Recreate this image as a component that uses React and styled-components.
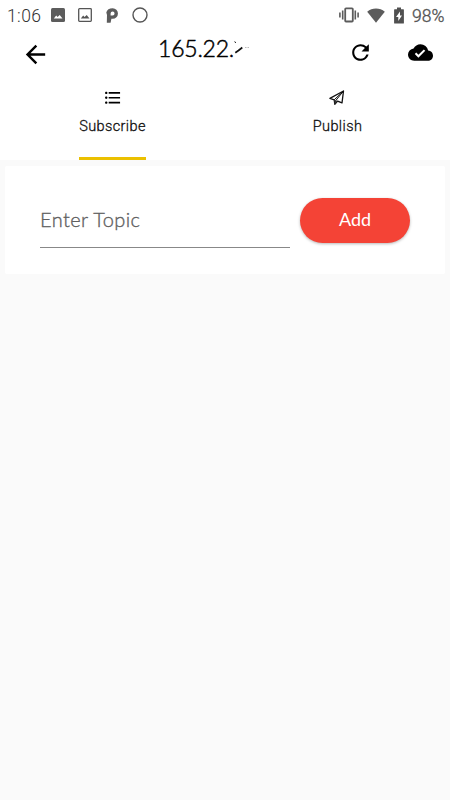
import React from 'react'
import styled, { createGlobalStyle } from 'styled-components'
import {
    MdArrowBack,
    MdRefresh,
    MdCloudDone,
    MdFormatListBulleted
} from 'react-icons/md'

const App = () => {
    return (
        <>
            <GlobalStyle />
            <Screen>
                <StatusBar>
                    <Clock>1:06</Clock>
                    <PictureIcon filled />
                    <PictureIcon />
                    <ParkingIcon />
                    <Ring />
                    <StatusRight>
                        <VibrateIcon />
                        <WifiIcon />
                        <BatteryIcon />
                        <Percent>98%</Percent>
                    </StatusRight>
                </StatusBar>
                <AppBar>
                    <BackButton aria-label="Back"><MdArrowBack size={29} /></BackButton>
                    <Title>165.22.<Scribble /></Title>
                    <Actions>
                        <IconButton aria-label="Refresh"><MdRefresh size={25} /></IconButton>
                        <IconButton aria-label="Connected"><MdCloudDone size={25} /></IconButton>
                    </Actions>
                </AppBar>
                <Tabs>
                    <Tab>
                        <TabLabel $active>
                            <TabIcon><MdFormatListBulleted size={19.5} /></TabIcon>
                            <TabText>Subscribe</TabText>
                        </TabLabel>
                    </Tab>
                    <Tab>
                        <TabLabel>
                            <TabIcon><PlaneIcon /></TabIcon>
                            <TabText>Publish</TabText>
                        </TabLabel>
                    </Tab>
                </Tabs>
                <Card>
                    <TopicInput placeholder="Enter Topic" />
                    <AddButton>Add</AddButton>
                </Card>
            </Screen>
        </>
    )
}

const PictureIcon = ({ filled }) => (
    <Picture viewBox="0 0 14 14" $filled={filled}>
        {filled
            ? <rect width="14" height="14" rx="1.5" fill="#5c5c5c" />
            : <rect x=".7" y=".7" width="12.6" height="12.6" rx=".8" fill="none" stroke="#555" strokeWidth="1.3" />}
        <path fill={filled ? '#fff' : '#555'} d="M2.8 10.5 5.2 7.6 6.6 9 8.7 7 11.5 10.5z" />
    </Picture>
)

const ParkingIcon = () => (
    <Parking viewBox="0 0 13 15">
        <path
            fill="#5c5c5c"
            fillRule="evenodd"
            d="M6.7.2a5 5 0 0 1 0 10.5H5.4L4.6 14.7H.8L1 7 .3 4.5C.9 1.7 3.3.2 6.7.2zM6.6 3.6a2 2 0 0 0-2 2v1.900h2a1.950 1.950 0 0 0 0-3.900z"
        />
    </Parking>
)

const VibrateIcon = () => (
    <Vibrate viewBox="0 0 20 16" fill="none" stroke="#5c5c5c">
        <rect x="6.2" y="1.3" width="7.6" height="13.2" rx=".8" strokeWidth="1.8" />
        <path strokeWidth="1.6" d="M3.7 3.5v9M16.3 3.5v9M.9 5.5v5M19.1 5.5v5" />
    </Vibrate>
)

const WifiIcon = () => (
    <Wifi viewBox="0 0 18 15">
        <path fill="#5c5c5c" d="M9 14.7.2 3.7C2.7 1.5 5.7.5 9 .5s6.3 1 8.8 3.2z" />
    </Wifi>
)

const BatteryIcon = () => (
    <Battery viewBox="0 0 10 17">
        <path fill="#505050" d="M3 .5h4v1.700h2.300q.6 0 .6.600v13.100q0 .6-.6.600H.7q-.6 0-.6-.6V2.800q0-.6.6-.6H3z" />
        <path fill="#fff" d="M6 4.5 2 10h2.300v4L8 8.500H6z" />
    </Battery>
)

const PlaneIcon = () => (
    <svg width="16" height="16" viewBox="0 0 16 16" fill="none" stroke="#111" strokeLinejoin="round">
        <path strokeWidth="1.3" d="M14.5 1 13 12.800 8.600 11.100 5.800 14.200 5.200 9.800.9 8.400z" />
        <path strokeWidth="1" d="M14.5 1 5.200 9.800M14.500 1 6.900 10.400" />
        <path fill="#333" stroke="none" d="M5.2 9.800 6.900 10.300 8.600 11.100 5.800 14.200z" />
    </svg>
)

const Scribble = () => (
    <Mark viewBox="0 0 18 16" fill="none" stroke="#111">
        <path strokeWidth="1.7" d="M1.3 11.700 4.500 9.500 8.300 6.500" />
        <path strokeWidth="1" d="M.5.7 2 1.700" />
        <path stroke="#bbb" d="M11 6.500h1.500M13.500 6.500h1.500" />
    </Mark>
)

const GlobalStyle = createGlobalStyle`
* {
    box-sizing: border-box;
}
body {
    margin: 0;
    background: #fafafa;
}
button {
    border: 0;
    padding: 0;
    background: none;
    color: #000;
}
svg {
    display: block;
    flex-shrink: 0;
}
`

const Screen = styled.main`
width: 450px;
height: 800px;
overflow: hidden;
background: #fafafa;
font-family: Roboto, sans-serif;
`

const StatusBar = styled.div`
display: flex;
align-items: center;
height: 30px;
padding: 0 5px 0 7px;
background: #fff;
color: #555;
`

const Clock = styled.span`
width: 44px;
font-size: 17.5px;
font-weight: 300;
letter-spacing: 0.4px;
line-height: 20px;
padding-top: 1px;
color: #333;
`

const Picture = styled.svg`
width: 14px;
height: 14px;
margin-right: ${props => props.$filled ? '13px' : '14px'};
`

const Parking = styled.svg`
width: 13px;
height: 15px;
margin-right: 13px;
`

const Ring = styled.svg.attrs({
    viewBox: '0 0 16 16',
    children: <circle cx="8" cy="8" r="7" fill="none" stroke="#555" strokeWidth="1.4" />
})`
width: 16px;
height: 16px;
`

const StatusRight = styled.div`
display: flex;
align-items: center;
width: 106px;
margin-left: auto;
`

const Vibrate = styled.svg`
width: 20px;
height: 16px;
margin-right: 8px;
`

const Wifi = styled.svg`
width: 18px;
height: 15px;
margin-right: 9px;
`

const Battery = styled.svg`
width: 10px;
height: 17px;
margin-right: 8px;
`

const Percent = styled.span`
font-size: 17.5px;
font-weight: 300;
line-height: 20px;
padding-top: 1px;
-webkit-text-stroke: 0.35px #555;
`

const AppBar = styled.header`
display: flex;
align-items: flex-start;
height: 46px;
padding: 10px 17.5px 0 21px;
background: #fff;
`

const BackButton = styled.button`
width: 29px;
height: 29px;
`

const Title = styled.h1`
display: flex;
align-items: center;
margin: -6px 0 0 108px;
font-family: Lato, sans-serif;
font-size: 23px;
font-weight: 300;
letter-spacing: -0.2px;
line-height: 29px;
color: #000;
-webkit-text-stroke: 0.5px #000;
`

const Mark = styled.svg`
width: 18px;
height: 16px;
`

const Actions = styled.div`
display: flex;
gap: 35px;
margin-left: auto;
`

const IconButton = styled.button`
width: 25px;
height: 25px;
`

const Tabs = styled.nav`
display: grid;
grid-template-columns: 1fr 1fr;
height: 84px;
background: #fff;
`

const Tab = styled.div`
display: flex;
justify-content: center;
`

const TabLabel = styled.div`
display: flex;
flex-direction: column;
align-items: center;
padding-top: 12px;
border-bottom: 3px solid ${props => props.$active ? '#ebc000' : 'transparent'};
`

const TabIcon = styled.span`
display: grid;
place-items: center;
height: 20px;
`

const TabText = styled.span`
margin-top: 10px;
font-size: 14.5px;
font-weight: 300;
line-height: 18px;
letter-spacing: 0.4px;
color: #111;
-webkit-text-stroke: 0.3px #111;
`

const Card = styled.section`
display: flex;
align-items: flex-start;
gap: 10px;
height: 108px;
margin: 6px 5px 0;
padding: 32px 35px 0;
border-radius: 2px;
background: #fff;
`

const TopicInput = styled.input`
width: 250px;
height: 50px;
padding: 0 0 8px;
border: 0;
border-bottom: 1px solid #888;
border-radius: 0;
outline: 0;
background: none;
font-family: Lato, sans-serif;
font-size: 20px;
font-weight: 300;
letter-spacing: 0.4px;
&::placeholder {
    color: #606060;
    opacity: 1;
    -webkit-text-stroke: 0.35px #606060;
}
`

const AddButton = styled.button`
width: 110px;
height: 45px;
padding-bottom: 3px;
border-radius: 23px;
background: #f44336;
box-shadow: 0 1px 3px rgba(0, 0, 0, 0.28);
font-family: Lato, sans-serif;
font-size: 18px;
color: #fff;
`

export default App
